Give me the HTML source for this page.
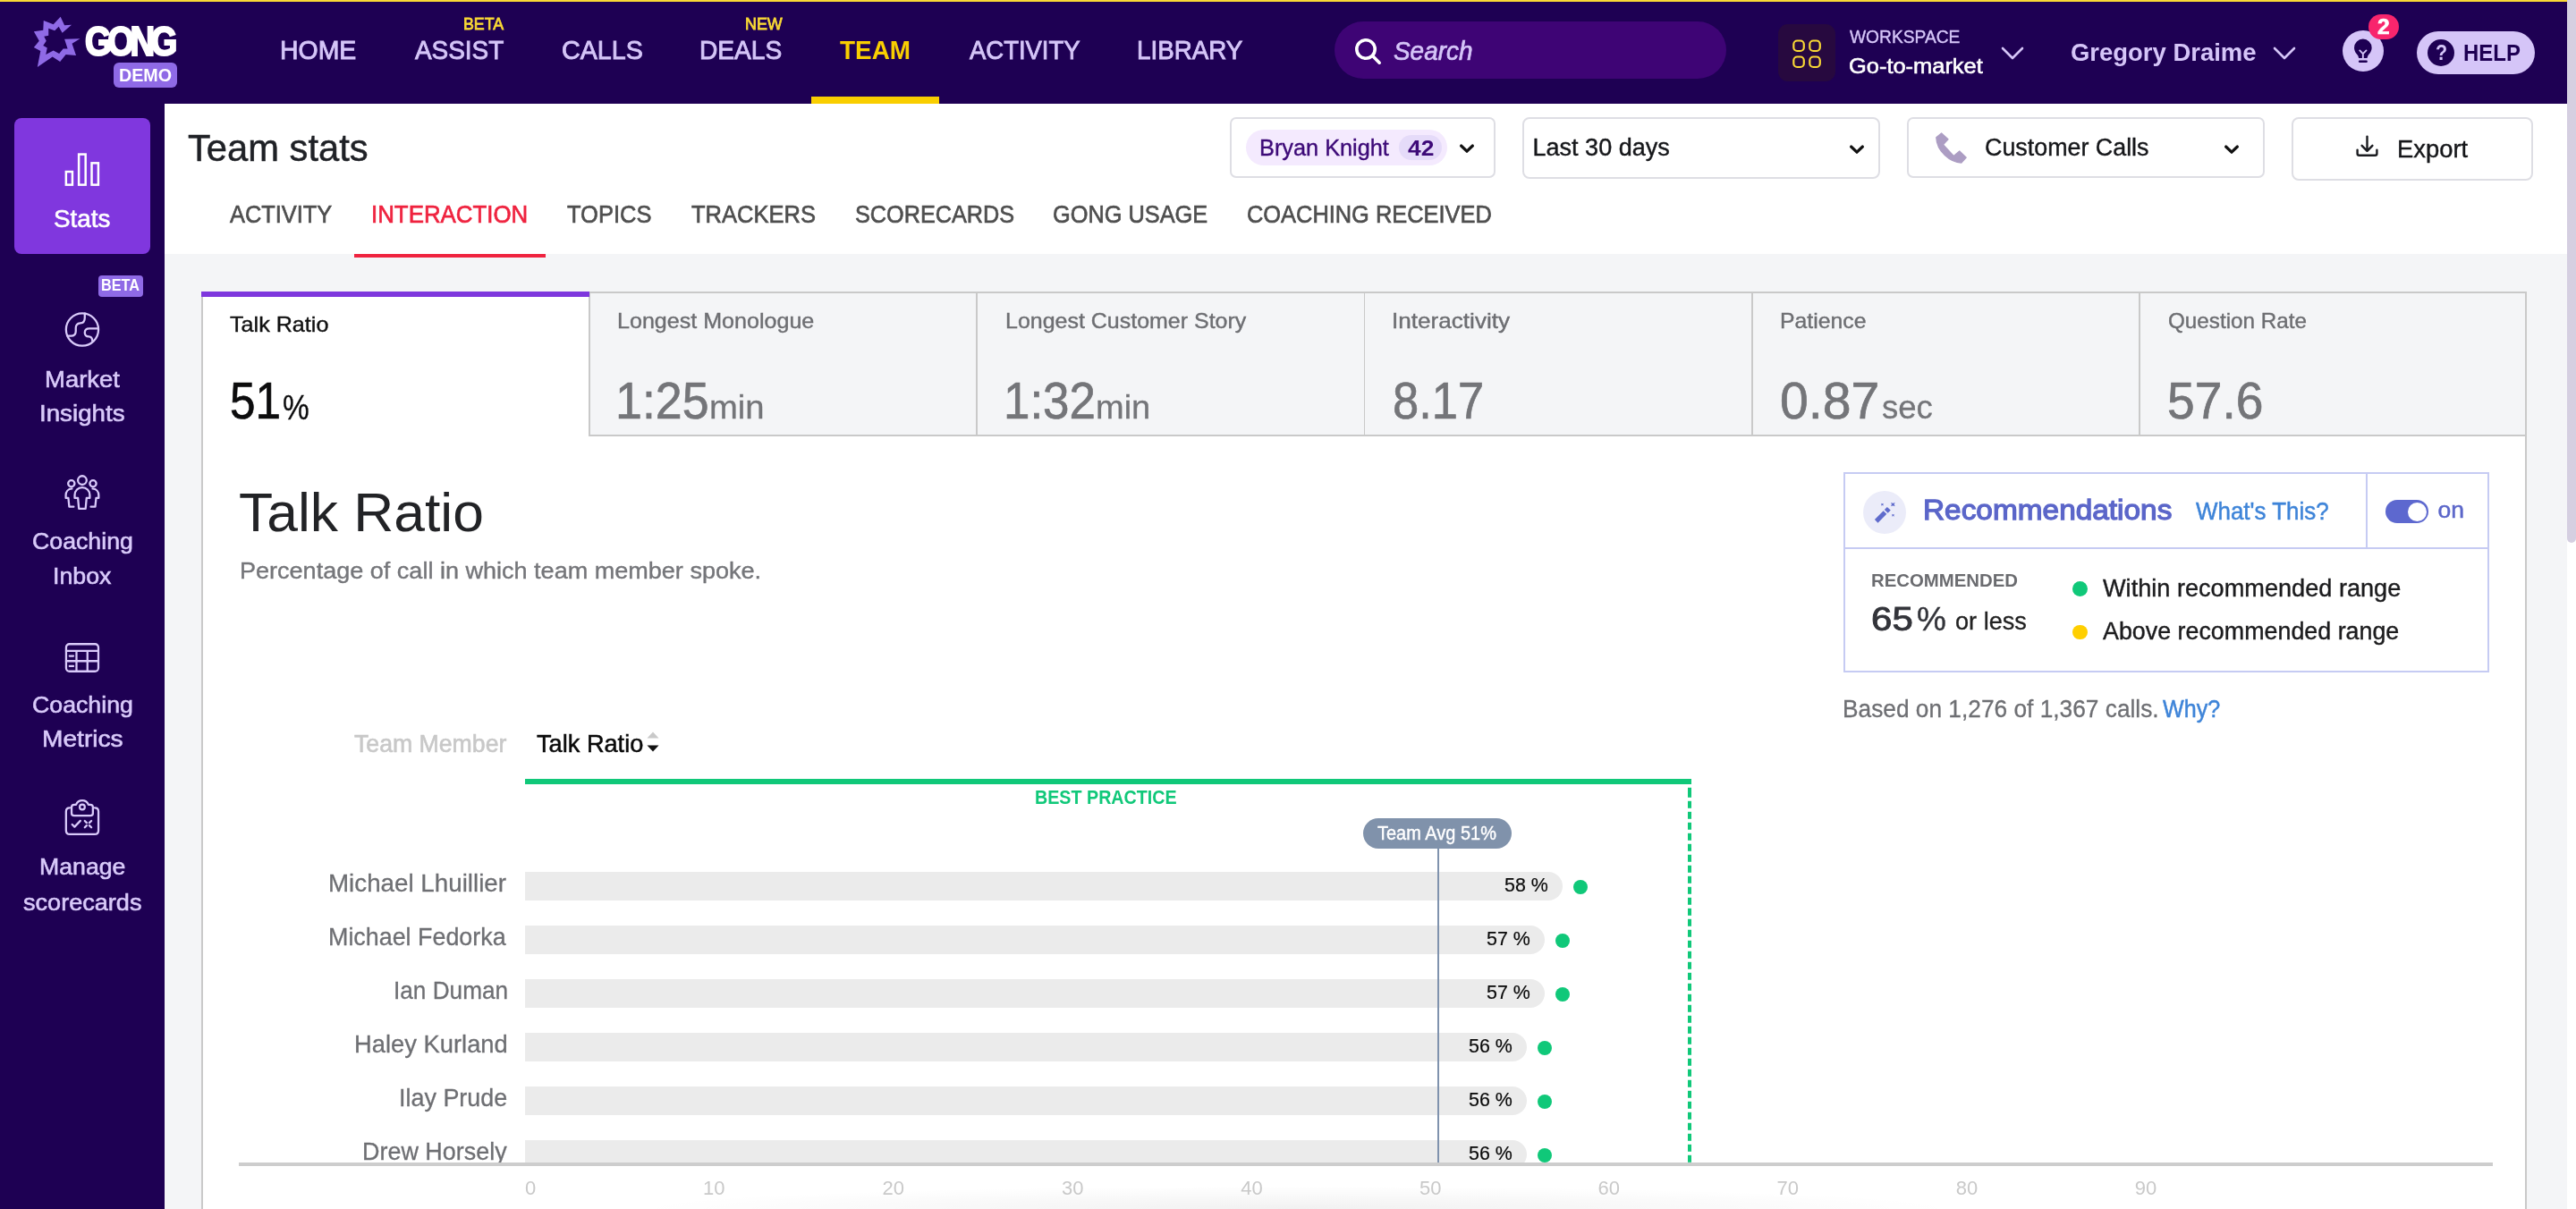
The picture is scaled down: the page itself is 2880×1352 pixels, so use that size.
<!DOCTYPE html>
<html lang="en"><head><meta charset="utf-8"><title>Team stats</title>
<style>
html,body{margin:0;padding:0}
html{width:2880px;height:1352px;overflow:hidden}
body{width:2880px;height:1352px;overflow:hidden;position:relative;background:#f4f5f7;font-family:"Liberation Sans",sans-serif}
.b{position:absolute;box-sizing:border-box;display:block}
.tl{position:absolute;left:0;top:0;width:2880px;height:1352px;will-change:transform}
.t{position:absolute;display:block;white-space:nowrap;line-height:1;transform-origin:0 0}
@media (max-width:1600px){html{zoom:.5}}
</style></head><body>
<div class="b" style="left:184px;top:116px;width:2686px;height:168px;background:#fff;"></div>
<div class="b" style="left:0px;top:0px;width:2870px;height:116px;background:#1e0053;"></div>
<div class="b" style="left:0px;top:0px;width:2870px;height:2px;background:#f9d835;"></div>
<div class="b" style="left:0px;top:116px;width:184px;height:1236px;background:#1e0053;"></div>
<div class="b" style="left:2870px;top:0px;width:10px;height:1352px;background:#fff;"></div>
<div class="b" style="left:2870px;top:-10px;width:10px;height:617px;background:#d5cfe1;border-radius:5px;"></div>
<svg class="b" style="left:20px;top:0px" width="200" height="120" viewBox="0 0 2015 1209"><polygon fill="#8f6ae6" points="290,232 400,275 480,190 525,285 605,280 500,370 460,300 415,345 345,320 345,400 295,410 320,460 285,515 330,540 315,615 400,570 465,605 510,550 560,550 525,440 700,435 610,490 655,625 540,615 475,695 390,640 220,755 255,575 180,535 240,460 180,355 285,340"/></svg>
<div class="b" style="left:127px;top:70px;width:71px;height:28px;background:#8f6ae6;border-radius:6px;"></div>
<div class="b" style="left:907px;top:108px;width:143px;height:8px;background:#f9ce00;"></div>
<div class="b" style="left:1492px;top:24px;width:438px;height:64px;background:#3e0475;border-radius:32px;"></div>
<svg class="b" style="left:1500px;top:30px" width="60" height="52" viewBox="0 0 60 52"><circle cx="27" cy="25" r="10.2" fill="none" stroke="#fff" stroke-width="3.6"/><path d="M34.6 32.6 L42.2 40.2" stroke="#fff" stroke-width="3.6" stroke-linecap="round"/></svg>
<div class="b" style="left:1988px;top:27px;width:64px;height:64px;background:#27093f;border-radius:11px;"></div>
<svg class="b" style="left:1988px;top:27px" width="64" height="64" viewBox="0 0 64 64"><g fill="none" stroke="#f9d835" stroke-width="2.2"><rect x="17.3" y="18.5" width="11.5" height="11.5" rx="4"/><rect x="35.3" y="18.5" width="11.5" height="11.5" rx="4"/><rect x="17.3" y="36.5" width="11.5" height="11.5" rx="4"/><rect x="35.3" y="36.5" width="11.5" height="11.5" rx="4"/></g></svg>
<svg class="b" style="left:2234px;top:48px" width="32" height="24" viewBox="0 0 32 24"><path d="M5 6 L16 17 L27 6" fill="none" stroke="#d5c5f8" stroke-width="2.6" stroke-linecap="round" stroke-linejoin="round"/></svg>
<svg class="b" style="left:2538px;top:48px" width="32" height="24" viewBox="0 0 32 24"><path d="M5 6 L16 17 L27 6" fill="none" stroke="#d5c5f8" stroke-width="2.6" stroke-linecap="round" stroke-linejoin="round"/></svg>
<div class="b" style="left:2618.5px;top:33.5px;width:46px;height:46px;background:#d5c5f8;border-radius:23px;"></div>
<svg class="b" style="left:2600px;top:10px" width="100" height="80" viewBox="0 0 1511 1209"><path fill="#1e0053" d="M632 508 A148 148 0 0 1 780 655 C780 720 745 752 716 790 L702 832 H562 L548 790 C519 752 484 720 484 655 A148 148 0 0 1 632 508 Z"/><path d="M576 888 H690" stroke="#1e0053" stroke-width="36" stroke-linecap="round"/><path d="M578 702 L632 758 L688 702 M632 758 V832" fill="none" stroke="#d5c5f8" stroke-width="28" stroke-linecap="round" stroke-linejoin="round"/></svg>
<div class="b" style="left:2647.8px;top:15.8px;width:34.5px;height:28.3px;background:#f8256d;border-radius:14.2px;"></div>
<div class="b" style="left:2702px;top:35px;width:132px;height:48px;background:#d5c5f8;border-radius:24px;"></div>
<div class="b" style="left:2713.6px;top:43.6px;width:30.8px;height:30.8px;background:#1e0053;border-radius:16px;"></div>
<div class="b" style="left:16px;top:132px;width:152px;height:152px;background:#8037de;border-radius:8px;"></div>
<svg class="b" style="left:52px;top:160px" width="80" height="60" viewBox="0 0 1612 1209"><g fill="none" stroke="#fff" stroke-width="50"><rect x="440" y="645" width="143" height="295"/><rect x="728" y="253" width="152" height="687"/><rect x="1018" y="450" width="149" height="490"/></g></svg>
<div class="b" style="left:110px;top:308px;width:50px;height:24px;background:#8f6ae6;border-radius:4px;"></div>
<svg class="b" style="left:52px;top:340px" width="80" height="60" viewBox="0 0 1612 1209"><g fill="none" stroke="#d9cafa" stroke-width="46" stroke-linecap="round" stroke-linejoin="round"><circle cx="805" cy="575" r="365"/><path d="M862 214 V310 C862 390 820 425 760 430 C700 435 660 470 660 540 V610 C660 690 620 720 550 720 H478"/><path d="M1160 553 H965 C900 553 862 590 862 645 C862 700 900 733 955 735 C1000 737 1030 770 1035 832"/></g></svg>
<svg class="b" style="left:52px;top:520px" width="80" height="60" viewBox="0 0 1612 1209"><g fill="none" stroke="#d9cafa" stroke-width="46" stroke-linecap="round" stroke-linejoin="round"><circle cx="805" cy="345" r="98"/><circle cx="560" cy="418" r="73"/><circle cx="1048" cy="418" r="73"/><path d="M730 985 L708 745 H635 V680 C635 575 710 505 805 505 C900 505 975 575 975 680 V745 H902 L880 985 Z"/><path d="M572 532 C490 540 435 600 435 680 V745 H492 L512 940 H612"/><path d="M1038 532 C1120 540 1175 600 1175 680 V745 H1118 L1098 940 H998"/></g></svg>
<svg class="b" style="left:52px;top:705px" width="80" height="60" viewBox="0 0 1612 1209"><g fill="none" stroke="#d9cafa" stroke-width="46" stroke-linecap="round" stroke-linejoin="round" stroke-width="50"><rect x="442" y="307" width="726" height="615" rx="75"/><path d="M442 462 H1168 M442 690 H1168 M675 462 V922 M922 462 V922"/><path d="M520 575 H605 M520 805 H605"/></g></svg>
<svg class="b" style="left:52px;top:885px" width="80" height="60" viewBox="0 0 1612 1209"><g fill="none" stroke="#d9cafa" stroke-width="46" stroke-linecap="round" stroke-linejoin="round" stroke-width="48"><path d="M525 370 C475 370 440 405 440 455 V880 C440 930 475 965 525 965 H1085 C1135 965 1170 930 1170 880 V455 C1170 405 1135 370 1085 370"/><path d="M565 495 V355 C565 320 590 300 625 300 H665 C690 240 740 205 805 205 C870 205 920 240 945 300 H985 C1020 300 1045 320 1045 355 V495 C1045 530 1020 548 990 548 H620 C590 548 565 530 565 495 Z"/><circle cx="805" cy="352" r="58" stroke-width="44"/><path d="M578 745 L632 798 L762 662"/><path d="M862 665 L905 708 M1010 665 L965 708 M862 812 L905 768 M1010 812 L965 768"/></g></svg>
<div class="b" style="left:396px;top:284px;width:214px;height:4px;background:#ef233f;"></div>
<div class="b" style="left:1375px;top:131px;width:297px;height:68px;background:#fff;border-radius:7px;border:2px solid #dedee4;"></div>
<div class="b" style="left:1393px;top:145px;width:225px;height:40px;background:#f4eafe;border-radius:20px;"></div>
<div class="b" style="left:1564px;top:151px;width:48px;height:28px;background:#e5dbf9;border-radius:14px;"></div>
<svg class="b" style="left:1630px;top:158px" width="20" height="16" viewBox="0 0 20 16"><path d="M3.600 5 L10 11.200 L16.400 5" fill="none" stroke="#111" stroke-width="3.200" stroke-linecap="round" stroke-linejoin="round"/></svg>
<div class="b" style="left:1702px;top:131px;width:400px;height:69px;background:#fff;border-radius:8px;border:2px solid #dedee4;"></div>
<svg class="b" style="left:2065.5px;top:158.5px" width="20" height="16" viewBox="0 0 20 16"><path d="M3.600 5 L10 11.200 L16.400 5" fill="none" stroke="#111" stroke-width="3.200" stroke-linecap="round" stroke-linejoin="round"/></svg>
<div class="b" style="left:2132px;top:131px;width:400px;height:68px;background:#fff;border-radius:7px;border:2px solid #dedee4;"></div>
<svg class="b" style="left:2140px;top:130px" width="100" height="70" viewBox="0 0 1727 1209"><path fill="#ac9dc3" stroke="#ac9dc3" stroke-width="22" stroke-linejoin="round" d="M528 326 L656 446 L560 548 L764 768 L876 672 L1006 796 L912 898 C 700 892 436 676 428 408 Z"/></svg>
<svg class="b" style="left:2484.5px;top:158.5px" width="20" height="16" viewBox="0 0 20 16"><path d="M3.600 5 L10 11.200 L16.400 5" fill="none" stroke="#111" stroke-width="3.200" stroke-linecap="round" stroke-linejoin="round"/></svg>
<div class="b" style="left:2562px;top:131px;width:270px;height:71px;background:#fff;border-radius:8px;border:2px solid #dedee4;"></div>
<svg class="b" style="left:2632px;top:150px" width="30" height="30" viewBox="0 0 30 30"><g fill="none" stroke="#1b1c20" stroke-width="2.400" stroke-linecap="round" stroke-linejoin="round"><path d="M14.500 2.600 V18.500 M8.600 12.800 L14.500 18.800 L20.400 12.800"/><path d="M3.600 17.600 V21.700 a2 2 0 0 0 2 2 H23.400 a2 2 0 0 0 2 -2 V17.600"/></g></svg>
<div class="b" style="left:225px;top:326px;width:2600px;height:1026px;background:#fff;border:2px solid #c9c9c9;border-bottom:0;"></div>
<div class="b" style="left:658px;top:326px;width:2167px;height:162px;background:#f4f5f7;border:2px solid #c9c9c9;"></div>
<div class="b" style="left:1091.3px;top:328px;width:1.9px;height:158px;background:#c9c9c9;"></div>
<div class="b" style="left:1524.5px;top:328px;width:1.9px;height:158px;background:#c9c9c9;"></div>
<div class="b" style="left:1957.7px;top:328px;width:1.9px;height:158px;background:#c9c9c9;"></div>
<div class="b" style="left:2390.8px;top:328px;width:1.9px;height:158px;background:#c9c9c9;"></div>
<div class="b" style="left:225px;top:326px;width:434px;height:6px;background:#7e37dd;"></div>
<div class="b" style="left:2061px;top:528px;width:722px;height:223.5px;background:#fff;border:2px solid #c6cbf3;"></div>
<div class="b" style="left:2061px;top:611.5px;width:722px;height:2px;background:#c6cbf3;"></div>
<div class="b" style="left:2645px;top:528px;width:2px;height:84.5px;background:#c6cbf3;"></div>
<div class="b" style="left:2083px;top:549px;width:48px;height:48px;background:#ebecf9;border-radius:24px;"></div>
<svg class="b" style="left:2070px;top:536px" width="80" height="72" viewBox="0 0 1343 1209"><g fill="#5f6bcc"><path d="M435 755 L598 590 L660 650 L495 820 Z"/><path d="M618 572 L668 520 L735 580 L683 634 Z"/><path d="M554 448 Q578 466.0 602 448 Q584.0 472 602 496 Q578 478.0 554 496 Q572.0 472 554 448 Z M740 434 Q778 462.5 816 434 Q787.5 472 816 510 Q778 481.5 740 510 Q768.5 472 740 434 Z M756 651 Q780 669.0 804 651 Q786.0 675 804 699 Q780 681.0 756 699 Q774.0 675 756 651 Z"/></g></svg>
<div class="b" style="left:2667px;top:559px;width:48px;height:26px;background:#5d68cf;border-radius:13px;"></div>
<div class="b" style="left:2691.5px;top:561.5px;width:21px;height:21px;background:#fff;border-radius:11px;"></div>
<div class="b" style="left:2317.3px;top:650px;width:16.5px;height:16.5px;background:#10c879;border-radius:9px;"></div>
<div class="b" style="left:2317.3px;top:698.7px;width:16.5px;height:16.5px;background:#ffcf00;border-radius:9px;"></div>
<svg class="b" style="left:721px;top:816px" width="18" height="28" viewBox="0 0 18 28"><path d="M9 2.500 L15.500 9.500 H2.500 Z" fill="#c9c9c9"/><path d="M9 24.500 L15.500 17.500 H2.500 Z" fill="#111"/></svg>
<div class="b" style="left:586.7px;top:871px;width:1304.3px;height:6px;background:#10c879;"></div>
<div class="b" style="left:1887px;top:877px;width:4px;height:423px;background:repeating-linear-gradient(to bottom,#10c879 0,#10c879 7.5px,transparent 7.5px,transparent 12px);background-position:0 6.800px;"></div>
<div class="b" style="left:586.7px;top:975px;width:1160.0px;height:32px;background:#ebebeb;border-radius:0 16px 16px 0;"></div>
<div class="b" style="left:1758.7px;top:983.6px;width:16px;height:16px;background:#10c879;border-radius:8px;"></div>
<div class="b" style="left:586.7px;top:1035px;width:1140.0px;height:32px;background:#ebebeb;border-radius:0 16px 16px 0;"></div>
<div class="b" style="left:1738.7px;top:1043.6px;width:16px;height:16px;background:#10c879;border-radius:8px;"></div>
<div class="b" style="left:586.7px;top:1095px;width:1140.0px;height:32px;background:#ebebeb;border-radius:0 16px 16px 0;"></div>
<div class="b" style="left:1738.7px;top:1103.6px;width:16px;height:16px;background:#10c879;border-radius:8px;"></div>
<div class="b" style="left:586.7px;top:1155px;width:1120.0px;height:32px;background:#ebebeb;border-radius:0 16px 16px 0;"></div>
<div class="b" style="left:1718.7px;top:1163.6px;width:16px;height:16px;background:#10c879;border-radius:8px;"></div>
<div class="b" style="left:586.7px;top:1215px;width:1120.0px;height:32px;background:#ebebeb;border-radius:0 16px 16px 0;"></div>
<div class="b" style="left:1718.7px;top:1223.6px;width:16px;height:16px;background:#10c879;border-radius:8px;"></div>
<div class="b" style="left:586.7px;top:1275px;width:1120.0px;height:32px;background:#ebebeb;border-radius:0 16px 16px 0;"></div>
<div class="b" style="left:1718.7px;top:1283.6px;width:16px;height:16px;background:#10c879;border-radius:8px;"></div>
<div class="b" style="left:1606.5px;top:948px;width:2px;height:352px;background:#7f92ad;"></div>
<div class="b" style="left:1524px;top:915px;width:166px;height:34px;background:#8092ab;border-radius:17px;"></div>
<div class="b" style="left:227px;top:1304px;width:2596px;height:48px;background:#fff;"></div>
<div class="b" style="left:700px;top:1326px;width:1500px;height:26px;background:radial-gradient(ellipse at 50% 100%,rgba(0,0,0,0.055),rgba(0,0,0,0) 70%);"></div>
<div class="tl">
<span class="t" style="left:95.40px;top:23.68px;font-size:45.5px;color:#fff;font-weight:700;letter-spacing:-5.5px;transform:scaleX(0.8427);-webkit-text-stroke:2.2px #fff;">GONG</span>
<span class="t" style="left:132.69px;top:72.82px;font-size:21px;color:#fff;font-weight:700;transform:scaleX(0.9380);">DEMO</span>
<span class="t" style="left:313.23px;top:40.73px;font-size:29.5px;color:#d5c5f8;transform:scaleX(0.9640);-webkit-text-stroke:0.9px #d5c5f8;">HOME</span>
<span class="t" style="left:464.05px;top:40.73px;font-size:29.5px;color:#d5c5f8;transform:scaleX(0.9462);-webkit-text-stroke:0.9px #d5c5f8;">ASSIST</span>
<span class="t" style="left:627.51px;top:40.73px;font-size:29.5px;color:#d5c5f8;transform:scaleX(0.9709);-webkit-text-stroke:0.9px #d5c5f8;">CALLS</span>
<span class="t" style="left:782.45px;top:40.73px;font-size:29.5px;color:#d5c5f8;transform:scaleX(0.9539);-webkit-text-stroke:0.9px #d5c5f8;">DEALS</span>
<span class="t" style="left:1083.75px;top:40.73px;font-size:29.5px;color:#d5c5f8;transform:scaleX(0.9309);-webkit-text-stroke:0.9px #d5c5f8;">ACTIVITY</span>
<span class="t" style="left:1271.48px;top:40.73px;font-size:29.5px;color:#d5c5f8;transform:scaleX(0.9416);-webkit-text-stroke:0.9px #d5c5f8;">LIBRARY</span>
<span class="t" style="left:939.40px;top:40.73px;font-size:29.5px;color:#f9ce00;font-weight:700;transform:scaleX(0.9458);">TEAM</span>
<span class="t" style="left:517.76px;top:17.94px;font-size:18.5px;color:#f9d835;transform:scaleX(0.9603);-webkit-text-stroke:0.8px #f9d835;">BETA</span>
<span class="t" style="left:832.55px;top:17.94px;font-size:18.5px;color:#f9d835;transform:scaleX(0.9664);-webkit-text-stroke:0.8px #f9d835;">NEW</span>
<span class="t" style="left:1557.61px;top:42.75px;font-size:29px;color:#d5c5f8;font-style:italic;transform:scaleX(0.9628);-webkit-text-stroke:0.7px #d5c5f8;">Search</span>
<span class="t" style="left:2068.20px;top:30.22px;font-size:21px;color:#d5c5f8;transform:scaleX(0.9139);-webkit-text-stroke:0.4px #d5c5f8;">WORKSPACE</span>
<span class="t" style="left:2067.05px;top:62.26px;font-size:24.5px;color:#fff;transform:scaleX(1.0378);-webkit-text-stroke:0.6px #fff;">Go-to-market</span>
<span class="t" style="left:2314.94px;top:44.07px;font-size:28.5px;color:#d5c5f8;font-weight:700;transform:scaleX(0.9634);">Gregory Draime</span>
<span class="t" style="left:2658.06px;top:19.18px;font-size:23.3px;color:#fff;font-weight:700;transform:scaleX(1.0531);-webkit-text-stroke:0.6px #fff;">2</span>
<span class="t" style="left:2722.57px;top:48.03px;font-size:23px;color:#d5c5f8;font-weight:700;transform:scaleX(0.9322);">?</span>
<span class="t" style="left:2754.40px;top:46.61px;font-size:25.5px;color:#1e0053;font-weight:700;transform:scaleX(0.9389);">HELP</span>
<span class="t" style="left:60.23px;top:231.30px;font-size:28px;color:#fff;transform:scaleX(0.9926);-webkit-text-stroke:0.6px #fff;">Stats</span>
<span class="t" style="left:112.98px;top:310.79px;font-size:17.5px;color:#fff;font-weight:700;transform:scaleX(0.9285);">BETA</span>
<span class="t" style="left:49.65px;top:410.57px;font-size:26.5px;color:#d9cafa;transform:scaleX(1.0366);-webkit-text-stroke:0.6px #d9cafa;">Market</span>
<span class="t" style="left:44.03px;top:449.27px;font-size:26.5px;color:#d9cafa;transform:scaleX(1.0460);-webkit-text-stroke:0.6px #d9cafa;">Insights</span>
<span class="t" style="left:36.05px;top:592.27px;font-size:26.5px;color:#d9cafa;transform:scaleX(1.0079);-webkit-text-stroke:0.6px #d9cafa;">Coaching</span>
<span class="t" style="left:59.01px;top:631.27px;font-size:26.5px;color:#d9cafa;transform:scaleX(1.0103);-webkit-text-stroke:0.6px #d9cafa;">Inbox</span>
<span class="t" style="left:36.05px;top:774.77px;font-size:26.5px;color:#d9cafa;transform:scaleX(1.0079);-webkit-text-stroke:0.6px #d9cafa;">Coaching</span>
<span class="t" style="left:46.70px;top:813.27px;font-size:26.5px;color:#d9cafa;transform:scaleX(1.0620);-webkit-text-stroke:0.6px #d9cafa;">Metrics</span>
<span class="t" style="left:44.12px;top:956.27px;font-size:26.5px;color:#d9cafa;transform:scaleX(1.0063);-webkit-text-stroke:0.6px #d9cafa;">Manage</span>
<span class="t" style="left:25.68px;top:995.97px;font-size:26.5px;color:#d9cafa;transform:scaleX(1.0221);-webkit-text-stroke:0.6px #d9cafa;">scorecards</span>
<span class="t" style="left:209.80px;top:145.35px;font-size:42px;color:#1f2126;transform:scaleX(0.9930);-webkit-text-stroke:0.5px #1f2126;">Team stats</span>
<span class="t" style="left:256.65px;top:225.17px;font-size:28.5px;color:#4f4f4f;transform:scaleX(0.8901);-webkit-text-stroke:0.7px #4f4f4f;">ACTIVITY</span>
<span class="t" style="left:634.45px;top:225.17px;font-size:28.5px;color:#4f4f4f;transform:scaleX(0.8938);-webkit-text-stroke:0.7px #4f4f4f;">TOPICS</span>
<span class="t" style="left:772.75px;top:225.17px;font-size:28.5px;color:#4f4f4f;transform:scaleX(0.8955);-webkit-text-stroke:0.7px #4f4f4f;">TRACKERS</span>
<span class="t" style="left:955.56px;top:225.17px;font-size:28.5px;color:#4f4f4f;transform:scaleX(0.8858);-webkit-text-stroke:0.7px #4f4f4f;">SCORECARDS</span>
<span class="t" style="left:1177.16px;top:225.17px;font-size:28.5px;color:#4f4f4f;transform:scaleX(0.8889);-webkit-text-stroke:0.7px #4f4f4f;">GONG USAGE</span>
<span class="t" style="left:1393.76px;top:225.17px;font-size:28.5px;color:#4f4f4f;transform:scaleX(0.8912);-webkit-text-stroke:0.7px #4f4f4f;">COACHING RECEIVED</span>
<span class="t" style="left:415.23px;top:225.17px;font-size:28.5px;color:#ef233f;transform:scaleX(0.9071);-webkit-text-stroke:0.7px #ef233f;">INTERACTION</span>
<span class="t" style="left:1407.62px;top:152.17px;font-size:26.5px;color:#3d0a78;transform:scaleX(0.9549);-webkit-text-stroke:0.4px #3d0a78;">Bryan Knight</span>
<span class="t" style="left:1573.66px;top:154.73px;font-size:23px;color:#3d0a78;font-weight:700;transform:scaleX(1.1479);">42</span>
<span class="t" style="left:1713.59px;top:152.14px;font-size:27px;color:#16171a;-webkit-text-stroke:0.4px #16171a;">Last 30 days</span>
<span class="t" style="left:2219.14px;top:152.14px;font-size:27px;color:#16171a;transform:scaleX(0.9943);-webkit-text-stroke:0.4px #16171a;">Customer Calls</span>
<span class="t" style="left:2680.06px;top:153.64px;font-size:27px;color:#16171a;transform:scaleX(1.0143);-webkit-text-stroke:0.4px #16171a;">Export</span>
<span class="t" style="left:257.18px;top:350.98px;font-size:24px;color:#111;transform:scaleX(1.0478);-webkit-text-stroke:0.4px #111;">Talk Ratio</span>
<span class="t" style="left:257.25px;top:420.13px;font-size:57.5px;color:#0c0c0d;transform:scaleX(0.8909);-webkit-text-stroke:0.7px #0c0c0d;">51</span>
<span class="t" style="left:316.10px;top:436.63px;font-size:38px;color:#0c0c0d;transform:scaleX(0.8802);-webkit-text-stroke:0.3px #0c0c0d;">%</span>
<span class="t" style="left:690.21px;top:346.88px;font-size:24px;color:#6d6e72;transform:scaleX(1.0448);-webkit-text-stroke:0.4px #6d6e72;">Longest Monologue</span>
<span class="t" style="left:688.49px;top:420.13px;font-size:57.5px;color:#747579;transform:scaleX(0.9350);-webkit-text-stroke:0.7px #747579;">1:25</span>
<span class="t" style="left:793.36px;top:438.33px;font-size:36px;color:#747579;transform:scaleX(1.0626);-webkit-text-stroke:0.3px #747579;">min</span>
<span class="t" style="left:1123.52px;top:346.88px;font-size:24px;color:#6d6e72;transform:scaleX(1.0405);-webkit-text-stroke:0.4px #6d6e72;">Longest Customer Story</span>
<span class="t" style="left:1121.84px;top:420.13px;font-size:57.5px;color:#747579;transform:scaleX(0.9199);-webkit-text-stroke:0.7px #747579;">1:32</span>
<span class="t" style="left:1224.78px;top:438.33px;font-size:36px;color:#747579;transform:scaleX(1.0552);-webkit-text-stroke:0.3px #747579;">min</span>
<span class="t" style="left:1556.31px;top:346.88px;font-size:24px;color:#6d6e72;transform:scaleX(1.0884);-webkit-text-stroke:0.4px #6d6e72;">Interactivity</span>
<span class="t" style="left:1556.71px;top:420.13px;font-size:57.5px;color:#747579;transform:scaleX(0.9120);-webkit-text-stroke:0.7px #747579;">8.17</span>
<span class="t" style="left:1989.94px;top:346.88px;font-size:24px;color:#6d6e72;transform:scaleX(1.0326);-webkit-text-stroke:0.4px #6d6e72;">Patience</span>
<span class="t" style="left:1989.76px;top:420.13px;font-size:57.5px;color:#747579;transform:scaleX(0.9937);-webkit-text-stroke:0.7px #747579;">0.87</span>
<span class="t" style="left:2103.58px;top:438.33px;font-size:36px;color:#747579;transform:scaleX(1.0146);-webkit-text-stroke:0.3px #747579;">sec</span>
<span class="t" style="left:2423.89px;top:346.88px;font-size:24px;color:#6d6e72;transform:scaleX(1.0101);-webkit-text-stroke:0.4px #6d6e72;">Question Rate</span>
<span class="t" style="left:2422.92px;top:420.13px;font-size:57.5px;color:#747579;transform:scaleX(0.9603);-webkit-text-stroke:0.7px #747579;">57.6</span>
<span class="t" style="left:266.63px;top:541.52px;font-size:62px;color:#222326;transform:scaleX(1.0062);">Talk Ratio</span>
<span class="t" style="left:267.59px;top:624.97px;font-size:26.5px;color:#75767a;transform:scaleX(1.0202);-webkit-text-stroke:0.4px #75767a;">Percentage of call in which team member spoke.</span>
<span class="t" style="left:2150.04px;top:554.41px;font-size:32px;color:#5b66c9;transform:scaleX(1.0433);-webkit-text-stroke:1.3px #5b66c9;">Recommendations</span>
<span class="t" style="left:2455.25px;top:557.80px;font-size:28px;color:#3e84d8;transform:scaleX(0.9267);-webkit-text-stroke:0.5px #3e84d8;">What&#x27;s This?</span>
<span class="t" style="left:2725.42px;top:557.07px;font-size:26.5px;color:#5b66c9;-webkit-text-stroke:0.5px #5b66c9;">on</span>
<span class="t" style="left:2092.44px;top:638.22px;font-size:21px;color:#6b6c70;font-weight:700;transform:scaleX(0.9694);">RECOMMENDED</span>
<span class="t" style="left:2092.28px;top:674.53px;font-size:36px;color:#33343a;transform:scaleX(1.1681);-webkit-text-stroke:0.9px #33343a;">65</span>
<span class="t" style="left:2143.05px;top:674.53px;font-size:36px;color:#33343a;transform:scaleX(1.0264);-webkit-text-stroke:0.4px #33343a;">%</span>
<span class="t" style="left:2185.80px;top:682.14px;font-size:27px;color:#222;transform:scaleX(1.0047);-webkit-text-stroke:0.3px #222;">or less</span>
<span class="t" style="left:2350.60px;top:644.64px;font-size:27px;color:#1c1c1e;transform:scaleX(1.0049);-webkit-text-stroke:0.4px #1c1c1e;">Within recommended range</span>
<span class="t" style="left:2350.60px;top:693.44px;font-size:27px;color:#1c1c1e;transform:scaleX(0.9943);-webkit-text-stroke:0.4px #1c1c1e;">Above recommended range</span>
<span class="t" style="left:2060.10px;top:780.04px;font-size:27px;color:#6e6f73;transform:scaleX(0.9735);-webkit-text-stroke:0.3px #6e6f73;">Based on 1,276 of 1,367 calls.</span>
<span class="t" style="left:2418.25px;top:780.04px;font-size:27px;color:#3e84d8;transform:scaleX(0.9291);-webkit-text-stroke:0.5px #3e84d8;">Why?</span>
<span class="t" style="left:395.88px;top:817.80px;font-size:28px;color:#c8c8c8;transform:scaleX(0.9520);-webkit-text-stroke:0.6px #c8c8c8;">Team Member</span>
<span class="t" style="left:599.83px;top:817.80px;font-size:28px;color:#0a0a0a;transform:scaleX(0.9706);-webkit-text-stroke:0.5px #0a0a0a;">Talk Ratio</span>
<span class="t" style="left:1157.12px;top:882.10px;font-size:21.5px;color:#10c879;font-weight:700;transform:scaleX(0.9160);">BEST PRACTICE</span>
<span class="t" style="left:367.38px;top:973.80px;font-size:28px;color:#6e6f73;transform:scaleX(0.9913);-webkit-text-stroke:0.3px #6e6f73;">Michael Lhuillier</span>
<span class="t" style="left:1682.02px;top:979.18px;font-size:22px;color:#0a0a0a;transform:scaleX(0.9736);-webkit-text-stroke:0.2px #0a0a0a;">58 %</span>
<span class="t" style="left:367.45px;top:1033.80px;font-size:28px;color:#6e6f73;transform:scaleX(0.9597);-webkit-text-stroke:0.3px #6e6f73;">Michael Fedorka</span>
<span class="t" style="left:1662.02px;top:1039.18px;font-size:22px;color:#0a0a0a;transform:scaleX(0.9736);-webkit-text-stroke:0.2px #0a0a0a;">57 %</span>
<span class="t" style="left:439.60px;top:1093.80px;font-size:28px;color:#6e6f73;transform:scaleX(0.9354);-webkit-text-stroke:0.3px #6e6f73;">Ian Duman</span>
<span class="t" style="left:1662.02px;top:1099.18px;font-size:22px;color:#0a0a0a;transform:scaleX(0.9736);-webkit-text-stroke:0.2px #0a0a0a;">57 %</span>
<span class="t" style="left:396.01px;top:1153.80px;font-size:28px;color:#6e6f73;transform:scaleX(0.9767);-webkit-text-stroke:0.3px #6e6f73;">Haley Kurland</span>
<span class="t" style="left:1642.02px;top:1159.18px;font-size:22px;color:#0a0a0a;transform:scaleX(0.9736);-webkit-text-stroke:0.2px #0a0a0a;">56 %</span>
<span class="t" style="left:446.05px;top:1213.80px;font-size:28px;color:#6e6f73;transform:scaleX(0.9621);-webkit-text-stroke:0.3px #6e6f73;">Ilay Prude</span>
<span class="t" style="left:1642.02px;top:1219.18px;font-size:22px;color:#0a0a0a;transform:scaleX(0.9736);-webkit-text-stroke:0.2px #0a0a0a;">56 %</span>
<span class="t" style="left:404.54px;top:1273.80px;font-size:28px;color:#6e6f73;transform:scaleX(0.9624);-webkit-text-stroke:0.3px #6e6f73;">Drew Horsely</span>
<span class="t" style="left:1642.02px;top:1279.18px;font-size:22px;color:#0a0a0a;transform:scaleX(0.9736);-webkit-text-stroke:0.2px #0a0a0a;">56 %</span>
<span class="t" style="left:1540.34px;top:921.28px;font-size:22px;color:#fff;transform:scaleX(0.9084);-webkit-text-stroke:0.4px #fff;">Team Avg 51%</span>
<span class="t" style="left:586.90px;top:1317.68px;font-size:22px;color:#c9c9c9;">0</span>
<span class="t" style="left:786.10px;top:1317.68px;font-size:22px;color:#c9c9c9;">10</span>
<span class="t" style="left:986.60px;top:1317.68px;font-size:22px;color:#c9c9c9;">20</span>
<span class="t" style="left:1186.90px;top:1317.68px;font-size:22px;color:#c9c9c9;">30</span>
<span class="t" style="left:1387.20px;top:1317.68px;font-size:22px;color:#c9c9c9;">40</span>
<span class="t" style="left:1586.90px;top:1317.68px;font-size:22px;color:#c9c9c9;">50</span>
<span class="t" style="left:1786.60px;top:1317.68px;font-size:22px;color:#c9c9c9;">60</span>
<span class="t" style="left:1986.60px;top:1317.68px;font-size:22px;color:#c9c9c9;">70</span>
<span class="t" style="left:2186.80px;top:1317.68px;font-size:22px;color:#c9c9c9;">80</span>
<span class="t" style="left:2386.70px;top:1317.68px;font-size:22px;color:#c9c9c9;">90</span>
</div>
<div class="b" style="left:227px;top:1304px;width:2596px;height:9px;background:#fff;"></div>
<div class="b" style="left:267px;top:1300px;width:2519.5px;height:4px;background:#cdcdcd;"></div>
</body></html>
